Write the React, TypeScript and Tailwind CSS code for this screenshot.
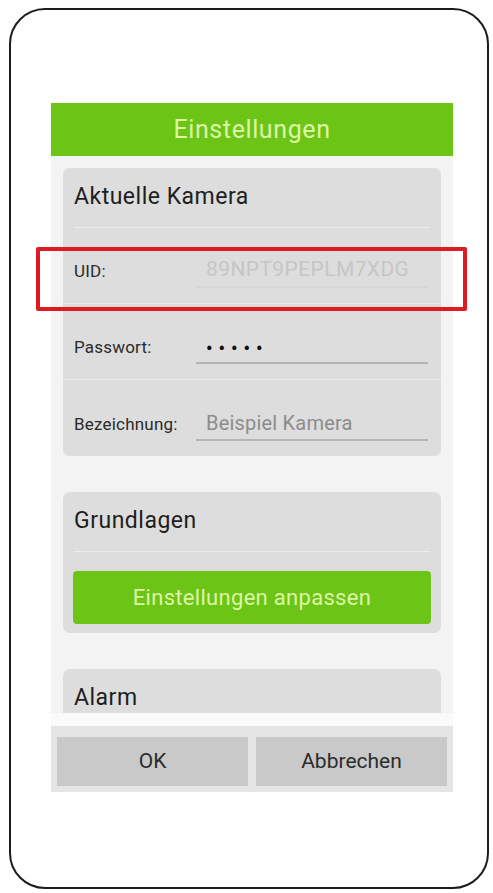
import { ReactNode } from "react";

const font = { fontFamily: "Roboto, 'Noto Sans', sans-serif" };

interface FieldRowProps {
  label: string;
  children: ReactNode;
  faint?: boolean;
  divider?: boolean;
}

function FieldRow({ label, children, faint = false, divider = true }: FieldRowProps) {
  return (
    <div className={`flex h-[76px] items-end px-[11px] pb-[15px] ${divider ? "border-b border-[#ececec]" : ""}`}>
      <span className="w-[122px] pb-[4px] text-[17px] tracking-[0.2px] text-[#2a2a2a]">{label}</span>
      <div
        className={`mr-[2px] flex h-[34px] flex-1 items-center pl-[10px] border-b-2 ${
          faint ? "border-[#d6d6d6]" : "border-[#b4b4b4]"
        }`}
      >
        {children}
      </div>
    </div>
  );
}

function Card({ title, children }: { title: string; children?: ReactNode }) {
  return (
    <div className="rounded-[7px] bg-[#dddddd]">
      <div className="mx-[11px] flex h-[60px] items-center border-b border-[#ececec] text-[23px] tracking-[0.5px] text-[#1e1e1e]">
        {title}
      </div>
      {children}
    </div>
  );
}

export default function App() {
  return (
    <div className="relative h-[893px] w-[493px] bg-white" style={font}>
      {/* phone outline */}
      <div className="ml-[9px] mt-[8px] h-[881px] w-[480px] rounded-[36px] border-2 border-[#1c1c1c] pl-[40px] pt-[93px]">
        <div className="w-[402px]">
          <div className="flex h-[53px] items-center justify-center bg-[#6cc516] text-[25px] tracking-[0.6px] text-[#dcf6a6]">
            Einstellungen
          </div>

          <div className="flex h-[557px] flex-col gap-[36px] overflow-hidden bg-[#f3f3f3] px-[12px] pt-[12px]">
            <Card title="Aktuelle Kamera">
              <FieldRow label="UID:" faint>
                <span className="text-[21px] tracking-[0.4px] text-[#c6c6c6]">89NPT9PEPLM7XDG</span>
              </FieldRow>
              <FieldRow label="Passwort:">
                <span className="pt-[4px] text-[18px] font-bold tracking-[6px] text-[#111]">•••••</span>
              </FieldRow>
              <FieldRow label="Bezeichnung:" divider={false}>
                <span className="text-[20px] tracking-[0.2px] text-[#8c8c8c]">Beispiel Kamera</span>
              </FieldRow>
            </Card>

            <Card title="Grundlagen">
              <div className="px-[10px] pb-[9px] pt-[19px]">
                <div className="flex h-[53px] items-center justify-center rounded-[4px] bg-[#6cc516] text-[22px] tracking-[0.3px] text-[#dcf6a6]">
                  Einstellungen anpassen
                </div>
              </div>
            </Card>

            <Card title="Alarm" />
          </div>

          <div className="h-[13px] bg-[#fafafa]" />

          <div className="flex gap-[8px] bg-[#e5e5e5] px-[6px] pb-[6px] pt-[11px]">
            <div className="flex h-[49px] flex-1 items-center justify-center bg-[#c9c9c9] text-[21px] text-[#2c2c2c]">
              OK
            </div>
            <div className="flex h-[49px] flex-1 items-center justify-center bg-[#c9c9c9] text-[21px] text-[#2c2c2c]">
              Abbrechen
            </div>
          </div>
        </div>
      </div>

      {/* highlight around the UID row */}
      <div className="absolute left-[36px] top-[239px] h-[64px] w-[431px] rounded-[2px] border-4 border-[#de1a22]" />
    </div>
  );
}
